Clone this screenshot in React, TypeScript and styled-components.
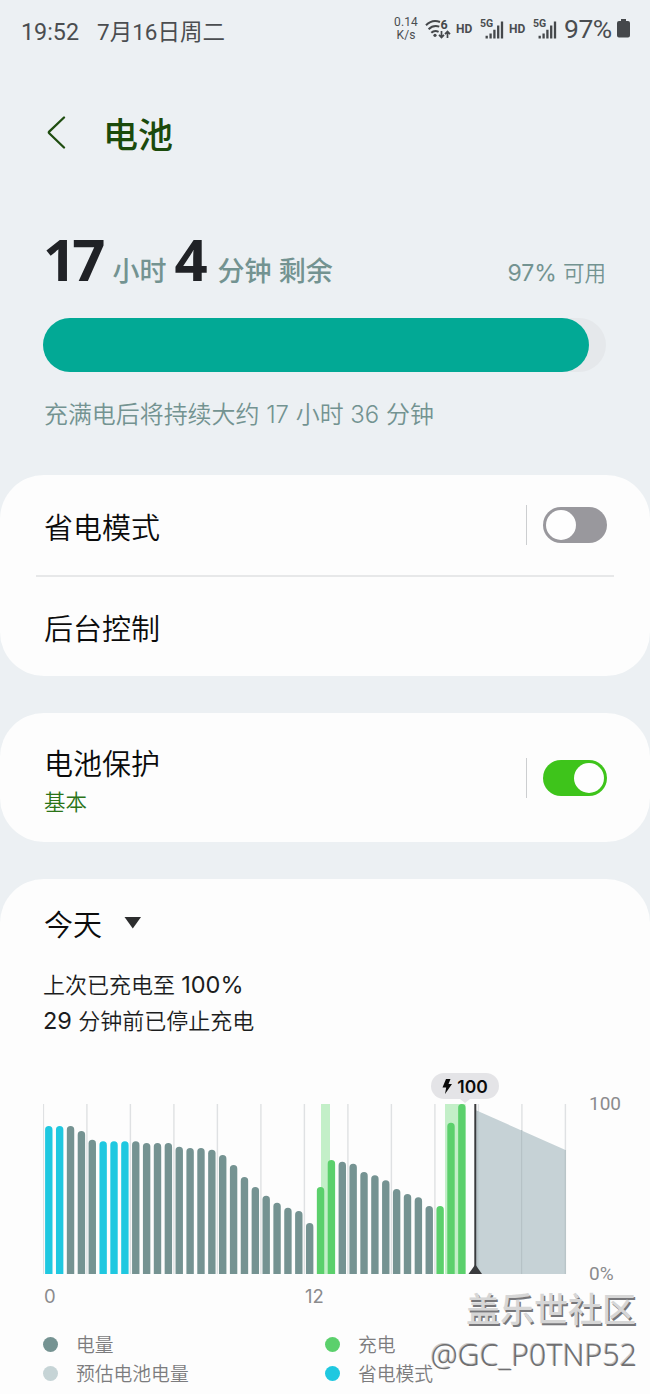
import React from 'react';
import styled, { createGlobalStyle } from 'styled-components';

const GlobalStyle = createGlobalStyle`
  * { box-sizing: border-box; }
  body {
    margin: 0;
    background: #ecf0f3;
    font-family: Inter, "Noto Sans CJK SC", sans-serif;
    font-weight: 350;
    color: #0b0b0b;
  }
`;

const Screen = styled.main`
  position: relative;
  width: 650px;
  height: 1394px;
  overflow: hidden;
  display: flex;
  flex-direction: column;
  white-space: nowrap;

  > * { flex-shrink: 0; }
`;

const StatusBar = styled.header`
  height: 62px;
  padding: 2px 20px 0 21px;
  display: flex;
  align-items: center;
  justify-content: space-between;
  color: #4a4d50;
  font-family: Roboto, "Noto Sans CJK SC", sans-serif;
  font-weight: 400;
`;

const StatusTime = styled.div`
  display: flex;
  gap: 18px;
  font-size: 22.5px;
  line-height: 30px;
`;

const Clock = styled.span`
  font-size: 23.3px;
`;

const StatusIcons = styled.div`
  display: flex;
  align-items: center;
  padding-bottom: 7px;
`;

const NetSpeed = styled.div`
  width: 24px;
  margin-right: 7px;
  text-align: center;
  font-size: 12px;
  line-height: 13px;
  letter-spacing: 0.1px;
`;

const StatusPercent = styled.span`
  width: 60px;
  padding-left: 7px;
  font-size: 26.5px;
  line-height: 30px;
  letter-spacing: -0.5px;
`;

const HdLabel = styled.span`
  width: 24px;
  font-size: 12px;
  font-weight: 700;
`;

const SignalIcon = styled.svg`
  width: 24px;
  height: 22px;
  margin-right: ${(p: { $gap?: number }) => p.$gap ?? 0}px;
`;

const TitleBar = styled.div`
  height: 142px;
  padding-left: 46px;
  display: flex;
  align-items: center;
  gap: 36px;
  color: #1b4a0b;
`;

const Title = styled.h1`
  margin: 4px 0 0;
  font-size: 35px;
  line-height: 44px;
  font-weight: 500;
`;

const Summary = styled.section`
  height: 271px;
  padding: 22px 44px 0 43px;
`;

const RemainRow = styled.div`
  height: 66px;
  display: flex;
  align-items: baseline;
  line-height: 66px;
  color: #739391;
`;

const BigNumber = styled.span`
  width: ${(p: { $w: number }) => p.$w}px;
  font-family: "Noto Sans", sans-serif;
  font-size: 58px;
  font-weight: 700;
  letter-spacing: -4px;
  color: #202226;
`;

const Unit = styled.span`
  width: ${(p: { $w: number }) => p.$w}px;
  font-size: 27px;
  font-weight: 500;
`;

const Available = styled.span`
  margin-left: auto;
  font-size: 21.5px;
`;

const Num = styled.span`
  font-size: 1.07em;
  font-weight: 400;
  line-height: 1;
`;

const BatteryTrack = styled.div`
  height: 54px;
  margin-top: 26px;
  border-radius: 27px;
  background: #e5e8eb;
`;

const BatteryFill = styled.div`
  width: 97%;
  height: 100%;
  border-radius: 27px;
  background: #02a995;
`;

const Estimate = styled.p`
  margin: 27px 0 0 1px;
  font-size: 23.95px;
  line-height: 32px;
  color: #739391;
`;

const Card = styled.section`
  margin-bottom: 37px;
  border-radius: 44px;
  background: #fdfdfd;
`;

const UsageCard = styled(Card)`
  height: 560px;
  padding: 27px 26px 0 43px;
`;

const Row = styled.div`
  height: ${(p: { $h: number }) => p.$h}px;
  padding: 0 43px 0 44px;
  display: flex;
  align-items: center;
`;

const RowText = styled.div`
  flex: 1;
`;

const RowTitle = styled.div`
  font-size: 29px;
  line-height: 40px;
  margin-top: 7px;
`;

const RowNote = styled.div`
  font-size: 21.5px;
  line-height: 32px;
  margin-top: 1px;
  color: #2b7418;
`;

const Divider = styled.hr`
  height: 2px;
  margin: 0 36px;
  border: 0;
  background: #e7e8e9;
`;

const ToggleArea = styled.div`
  height: 40px;
  padding-left: 16px;
  border-left: 1px solid #ccced0;
  display: flex;
  align-items: center;
`;

const Toggle = styled.div<{ $on?: boolean }>`
  width: 64px;
  height: 36px;
  padding: 3px;
  display: flex;
  justify-content: ${(p) => (p.$on ? 'flex-end' : 'flex-start')};
  border-radius: 18px;
  background: ${(p) => (p.$on ? '#3ec41b' : '#99989d')};
`;

const Knob = styled.div`
  width: 30px;
  height: 30px;
  border-radius: 50%;
  background: #fefefe;
`;

const DayPicker = styled.div`
  display: flex;
  align-items: center;
  gap: 22px;
  padding-left: 1px;
  font-size: 29px;
  line-height: 40px;

  svg { margin-bottom: 7px; }
`;

const ChargeInfo = styled.p`
  height: 71px;
  margin: 22px 0 0 0;
  font-size: 22px;
  line-height: 35.5px;
  color: #1c1d1e;
`;

const ChartRow = styled.div`
  position: relative;
  height: 170px;
  margin-top: 65px;
  display: flex;
  gap: 22px;
`;

const YAxis = styled.div`
  height: 194px;
  margin-top: -12px;
  display: flex;
  flex-direction: column;
  justify-content: space-between;
  color: #8b8b8d;
  font-family: Roboto, sans-serif;
  font-size: 19px;
  font-weight: 400;
  line-height: 24px;
`;

const XAxis = styled.div`
  display: flex;
  margin-top: 10px;
  padding-left: 1px;
  color: #8b8b8d;
  font-size: 18.5px;
  font-weight: 400;
  line-height: 24px;
`;

const XLabel = styled.span`
  width: 261px;
`;

const Bubble = styled.div`
  position: absolute;
  left: 388px;
  top: -31px;
  width: 68px;
  height: 26px;
  display: flex;
  align-items: center;
  justify-content: center;
  gap: 5px;
  border-radius: 13px;
  background: #e4e4e7;
  font-size: 17.5px;
  font-weight: 600;

  &::after {
    content: "";
    position: absolute;
    left: 29px;
    top: 26px;
    border: 5px solid transparent;
    border-top: 4px solid #e4e4e7;
    border-bottom: 0;
  }
`;

const Legend = styled.div`
  margin-top: 24px;
  display: grid;
  grid-template-columns: 282px 200px;
  row-gap: 1px;
  font-size: 18.8px;
  line-height: 28px;
  color: #7c7c7e;
`;

const LegendItem = styled.div`
  display: flex;
  align-items: center;
  gap: 18px;
`;

const Dot = styled.i`
  width: 15px;
  height: 15px;
  margin-bottom: 4px;
  border-radius: 50%;
  background: ${(p: { $color: string }) => p.$color};
`;

const Watermark = styled.div`
  position: absolute;
  right: 13px;
  bottom: 17px;
  display: flex;
  flex-direction: column;
  align-items: flex-end;
`;

const WatermarkName = styled.span`
  margin-right: 1px;
  font-size: 34px;
  line-height: 44px;
  font-weight: 500;
  color: #d6d6d6;
  text-shadow: 1.5px 1.5px 0 #77777a;
`;

const WatermarkUser = styled.span`
  font-family: "Noto Sans", sans-serif;
  font-size: 30.3px;
  line-height: 45px;
  font-weight: 300;
  color: #6f6f71;
  text-shadow: -1px -1px 0 #c9c9ca;
`;

type Kind = 'usage' | 'charge' | 'saver';

const COLORS: Record<Kind, string> = {
  usage: '#759392',
  charge: '#5bd06c',
  saver: '#1fc8e0',
};

// Height of each half-hour bar, in chart units (170 = fully charged).
const LEVELS = [
  148, 148, 148, 143, 134.3, 132.7, 132.7, 132.7, 132.7, 131, 131, 131, 127.3,
  126, 126, 124.3, 119, 109, 97, 87, 78.3, 71.3, 66.3, 63, 51, 87, 114, 112.3,
  110.3, 102, 98.7, 93.7, 85, 80, 76.7, 68, 68, 151.3, 170,
];

const SAVER = [0, 1, 5, 6, 7];
const CHARGE = [25, 26, 36, 37, 38];

function kindOf(i: number): Kind {
  if (SAVER.includes(i)) return 'saver';
  if (CHARGE.includes(i)) return 'charge';
  return 'usage';
}

const ChartCanvas = styled.svg`
  flex: none;
`;

function Chart() {
  return (
    <ChartCanvas width="524" height="170" viewBox="0 0 524 170">
      {Array.from({ length: 13 }, (_, k) => (
        <rect key={k} x={k * 43.5 - 0.3} y="0" width="1.4" height="170" fill="#dfe1e3" />
      ))}
      <rect x="278" y="0" width="9" height="170" fill="#c3efc8" />
      <rect x="402" y="0" width="20.5" height="170" fill="#c3efc8" />
      {LEVELS.map((h, i) => {
        const x = 2.1 + i * 10.87;
        const y = 170 - h;
        return (
          <path
            key={i}
            d={`M${x} 170V${y + 3.7}a3.7 3.7 0 0 1 7.4 0V170z`}
            fill={COLORS[kindOf(i)]}
          />
        );
      })}
      <path d="M432.500 6L522.500 46V170H432.500z" fill="#c6d2d6" />
      <path d="M434.800 7V170M478.600 26V170M522.300 46V170" stroke="#b6c2c6" strokeWidth="1.2" />
      <rect x="431.300" y="0" width="2" height="170" fill="#3a3b3d" />
      <path d="M425.500 170L432.300 160.500L439 170z" fill="#3a3b3d" />
    </ChartCanvas>
  );
}

function Signal({ gap }: { gap?: number }) {
  return (
    <SignalIcon viewBox="0 0 24 22" $gap={gap}>
      <text x="0" y="9" fontSize="10.5" fontWeight="700" fontFamily="Roboto" fill="#4a4d50">5G</text>
      <path
        d="M6.700 20.400v-2.600M10.600 20.400v-5M14.400 20.400V11.800M18.200 20.400V7.600M22 20.400V3.400"
        stroke="#45484b"
        strokeWidth="2.3"
        fill="none"
      />
    </SignalIcon>
  );
}

function WifiIcon() {
  return (
    <svg width="31" height="22" viewBox="0 0 31 22" fill="none" stroke="#45484b" strokeWidth="2">
      <path d="M1 7.200C5 3.200 10.500 2.200 15 4" />
      <path d="M3.600 11.200C6.600 8.200 10.500 7.400 14.300 8.600" />
      <path d="M6.300 14.800C8.300 12.800 11 12.500 13.600 13.800" />
      <circle cx="10" cy="17.300" r="1.600" fill="#45484b" stroke="none" />
      <text x="15.500" y="10.800" fontSize="12.500" fontWeight="700" fontFamily="Roboto" fill="#45484b" stroke="none">6</text>
      <path d="M16.500 13v6M14 16.800l2.500 2.600 2.500-2.600M22.500 20v-6M20 16.200l2.500-2.600 2.500 2.600" strokeWidth="1.700" />
    </svg>
  );
}

export default function App() {
  return (
    <Screen>
      <GlobalStyle />
      <StatusBar>
        <StatusTime>
          <Clock>19:52</Clock>
          <span>7月16日周二</span>
        </StatusTime>
        <StatusIcons>
          <NetSpeed>0.14<br />K/s</NetSpeed>
          <WifiIcon />
          <HdLabel>HD</HdLabel>
          <Signal gap={5} />
          <HdLabel>HD</HdLabel>
          <Signal />
          <StatusPercent>97%</StatusPercent>
          <svg width="13" height="19" viewBox="0 0 13 19">
            <path d="M4 0h5v2h2a2 2 0 0 1 2 2v12.500a2 2 0 0 1-2 2H2a2 2 0 0 1-2-2V4a2 2 0 0 1 2-2h2z" fill="#45484b" />
          </svg>
        </StatusIcons>
      </StatusBar>

      <TitleBar>
        <svg width="21" height="34" viewBox="0 0 21 34" fill="none" stroke="#1f4d10" strokeWidth="2.300" strokeLinecap="round" strokeLinejoin="round">
          <path d="M18 1.500L3.200 15.700Q2.400 16.500 3.200 17.300L18 31.500" />
        </svg>
        <Title>电池</Title>
      </TitleBar>

      <Summary>
        <RemainRow>
          <BigNumber $w={69.5}>17</BigNumber>
          <Unit $w={62}>小时</Unit>
          <BigNumber $w={43}>4</BigNumber>
          <Unit $w={130}>分钟 剩余</Unit>
          <Available><Num>97%</Num> 可用</Available>
        </RemainRow>
        <BatteryTrack><BatteryFill /></BatteryTrack>
        <Estimate>充满电后将持续大约 17 小时 36 分钟</Estimate>
      </Summary>

      <Card>
        <Row $h={100}>
          <RowText><RowTitle>省电模式</RowTitle></RowText>
          <ToggleArea><Toggle><Knob /></Toggle></ToggleArea>
        </Row>
        <Divider />
        <Row $h={99}>
          <RowText><RowTitle>后台控制</RowTitle></RowText>
        </Row>
      </Card>

      <Card>
        <Row $h={129}>
          <RowText>
            <RowTitle>电池保护</RowTitle>
            <RowNote>基本</RowNote>
          </RowText>
          <ToggleArea><Toggle $on><Knob /></Toggle></ToggleArea>
        </Row>
      </Card>

      <UsageCard>
        <DayPicker>
          今天
          <svg width="18" height="12" viewBox="0 0 18 12"><path d="M0.500 0h16.500L8.800 11.500z" fill="#2c2d2e" /></svg>
        </DayPicker>
        <ChargeInfo>
          上次已充电至 <Num>100%</Num><br />
          <Num>29</Num> 分钟前已停止充电
        </ChargeInfo>
        <ChartRow>
          <Chart />
          <YAxis><span>100</span><span>0%</span></YAxis>
          <Bubble>
            <svg width="10" height="15" viewBox="0 0 10 15"><path d="M4 0h4.500L6.500 5H10L3 15L4.200 8.500H0.500z" fill="#0b0b0b" /></svg>
            100
          </Bubble>
        </ChartRow>
        <XAxis><XLabel>0</XLabel><XLabel>12</XLabel></XAxis>
        <Legend>
          <LegendItem><Dot $color="#759392" />电量</LegendItem>
          <LegendItem><Dot $color="#5bd06c" />充电</LegendItem>
          <LegendItem><Dot $color="#c6d4d6" />预估电池电量</LegendItem>
          <LegendItem><Dot $color="#1fc8e0" />省电模式</LegendItem>
        </Legend>
      </UsageCard>

      <Watermark>
        <WatermarkName>盖乐世社区</WatermarkName>
        <WatermarkUser>@GC_P0TNP52</WatermarkUser>
      </Watermark>
    </Screen>
  );
}
